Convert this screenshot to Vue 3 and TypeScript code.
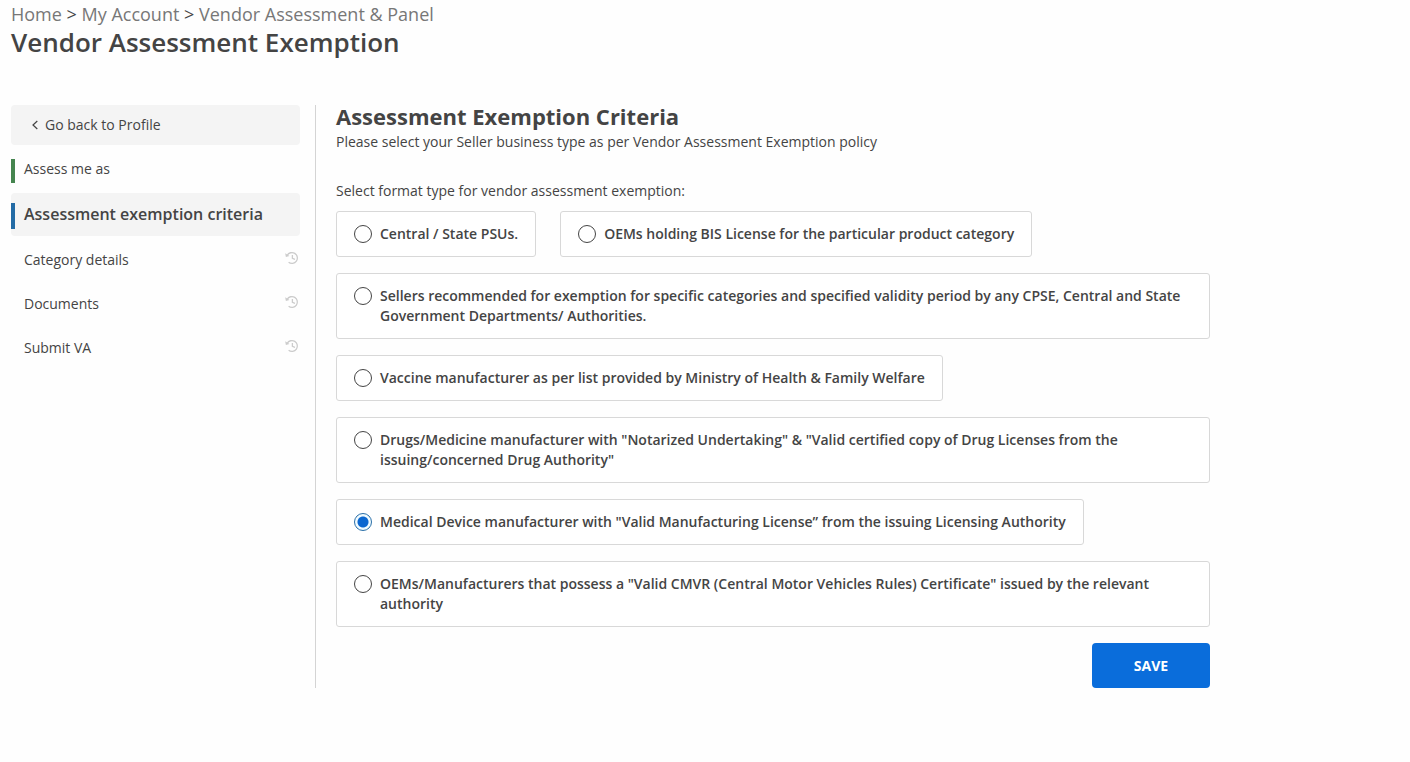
<script setup lang="ts">
import { ref } from 'vue'

interface Crumb {
  label: string
  href: string
}

interface Step {
  label: string
  state: 'done' | 'active' | 'pending'
}

const crumbs: Crumb[] = [
  { label: 'Home', href: '#home' },
  { label: 'My Account', href: '#account' },
  { label: 'Vendor Assessment & Panel', href: '#panel' },
]

const steps: Step[] = [
  { label: 'Assess me as', state: 'done' },
  { label: 'Assessment exemption criteria', state: 'active' },
  { label: 'Category details', state: 'pending' },
  { label: 'Documents', state: 'pending' },
  { label: 'Submit VA', state: 'pending' },
]

const options: string[] = [
  'Central / State PSUs.',
  'OEMs holding BIS License for the particular product category',
  'Sellers recommended for exemption for specific categories and specified validity period by any CPSE, Central and State Government Departments/ Authorities.',
  'Vaccine manufacturer as per list provided by Ministry of Health & Family Welfare',
  'Drugs/Medicine manufacturer with "Notarized Undertaking" & "Valid certified copy of Drug Licenses from the issuing/concerned Drug Authority"',
  'Medical Device manufacturer with "Valid Manufacturing License” from the issuing Licensing Authority',
  'OEMs/Manufacturers that possess a "Valid CMVR (Central Motor Vehicles Rules) Certificate" issued by the relevant authority',
]

const selected = ref(5)
</script>

<template>
  <div class="page">
    <header class="head">
      <nav class="crumbs" aria-label="Breadcrumb">
        <template v-for="(crumb, i) in crumbs" :key="crumb.label">
          <span v-if="i > 0"> &gt; </span>
          <a :href="crumb.href">{{ crumb.label }}</a>
        </template>
      </nav>
      <h1>Vendor Assessment Exemption</h1>
    </header>

    <div class="columns">
      <aside class="side">
        <a class="back" href="#profile">
          <svg width="6" height="10" viewBox="0 0 6 10" aria-hidden="true">
            <path d="M5.3 1 1 5l4.3 4" fill="none" stroke="currentColor" stroke-width="1.2" />
          </svg>
          <span>Go back to Profile</span>
        </a>
        <nav class="steps" aria-label="Steps">
          <a
            v-for="step in steps"
            :key="step.label"
            href="#step"
            class="step"
            :class="step.state"
          >
            <span>{{ step.label }}</span>
            <svg
              v-if="step.state === 'pending'"
              class="history"
              width="14"
              height="14"
              viewBox="0 0 14 14"
              aria-hidden="true"
            >
              <path
                d="M2.2 4.4A5.4 5.4 0 1 1 3.6 11.2M7.4 4v3.4l2.6 1"
                fill="none"
                stroke="currentColor"
                stroke-width="1.3"
              />
              <path d="M.2 2.2.9 5.9 4.5 5Z" fill="currentColor" />
            </svg>
          </a>
        </nav>
      </aside>

      <main class="main">
        <h2>Assessment Exemption Criteria</h2>
        <p class="intro">Please select your Seller business type as per Vendor Assessment Exemption policy</p>
        <form @submit.prevent>
          <fieldset>
            <legend>Select format type for vendor assessment exemption:</legend>
            <div class="options">
              <label v-for="(text, i) in options" :key="i" class="option" :for="`option-${i}`">
                <input :id="`option-${i}`" v-model="selected" type="radio" name="format" :value="i" />
                <span>{{ text }}</span>
              </label>
            </div>
          </fieldset>
          <div class="actions">
            <button type="submit">SAVE</button>
          </div>
        </form>
      </main>
    </div>
  </div>
</template>

<style>
body {
  background: #fefefe;
}
</style>

<style scoped>
.page {
  box-sizing: border-box;
  max-width: 1221px;
  padding: 4px 11px 24px;
  font-family: 'Open Sans', 'Noto Sans', sans-serif;
  font-size: 14px;
  line-height: 20px;
  color: #444;
}

a {
  color: inherit;
  text-decoration: none;
}

h1,
h2,
p {
  margin: 0;
}

.crumbs {
  font-size: 18px;
  line-height: 20px;
}

.crumbs a {
  color: #777;
}

h1 {
  font-size: 26px;
  line-height: 36px;
  font-weight: 600;
}

.columns {
  display: flex;
  margin-top: 45px;
}

.side {
  box-sizing: border-box;
  flex: 0 0 305px;
  padding-right: 15px;
  border-right: 1px solid #d4d4d4;
}

.back {
  display: flex;
  align-items: center;
  gap: 7px;
  padding: 10px 21px;
  border-radius: 4px;
  background: #f4f4f4;
}

.steps {
  display: flex;
  flex-direction: column;
  margin-top: 4px;
}

.step {
  display: flex;
  align-items: center;
  justify-content: space-between;
  padding: 10px 1px 10px 0;
}

.step span {
  padding: 0 9px;
  border-left: 4px solid transparent;
  line-height: 24px;
}

.done span {
  padding-bottom: 4px;
  line-height: 20px;
  border-left-color: #45854f;
}

.active {
  margin-bottom: 2px;
  padding: 10px 0 7px;
  border-radius: 4px;
  background: #f4f4f4;
  font-size: 16px;
  font-weight: 600;
}

.active span {
  padding-bottom: 4px;
  line-height: 22px;
  border-left-color: #236ba5;
}

.history {
  margin-bottom: 4px;
  color: #ccc;
}

.main {
  flex: 1;
  min-width: 0;
  padding-left: 20px;
}

h2 {
  margin-bottom: 4px;
  font-size: 22px;
  line-height: 23px;
  font-weight: 700;
}

.intro {
  margin-bottom: 29px;
}

fieldset {
  min-width: 0;
  margin: 0;
  padding: 0;
  border: 0;
}

legend {
  padding: 0 0 10px;
}

.options {
  display: flex;
  flex-wrap: wrap;
  gap: 16px 24px;
}

.option {
  display: flex;
  align-items: flex-start;
  gap: 8px;
  padding: 12px 17px;
  border: 1px solid #d8d8d8;
  border-radius: 3px;
  background: #fff;
  font-weight: 600;
}

.option input {
  flex: none;
  box-sizing: border-box;
  appearance: none;
  width: 18px;
  height: 18px;
  margin: 1px 0;
  border: 1px solid #444;
  border-radius: 50%;
  background: #fff;
}

.option input:checked {
  border-color: #2a6fa8;
  background: radial-gradient(circle, #0b67d0 5px, #f0fbff 6px);
}

.actions {
  display: flex;
  justify-content: flex-end;
  margin-top: 16px;
}

button {
  min-width: 118px;
  padding: 13px 20px 12px;
  border: 0;
  border-radius: 4px;
  background: #0a6ddb;
  color: #fff;
  font: 700 14px/20px 'Open Sans', 'Noto Sans', sans-serif;
}
</style>
